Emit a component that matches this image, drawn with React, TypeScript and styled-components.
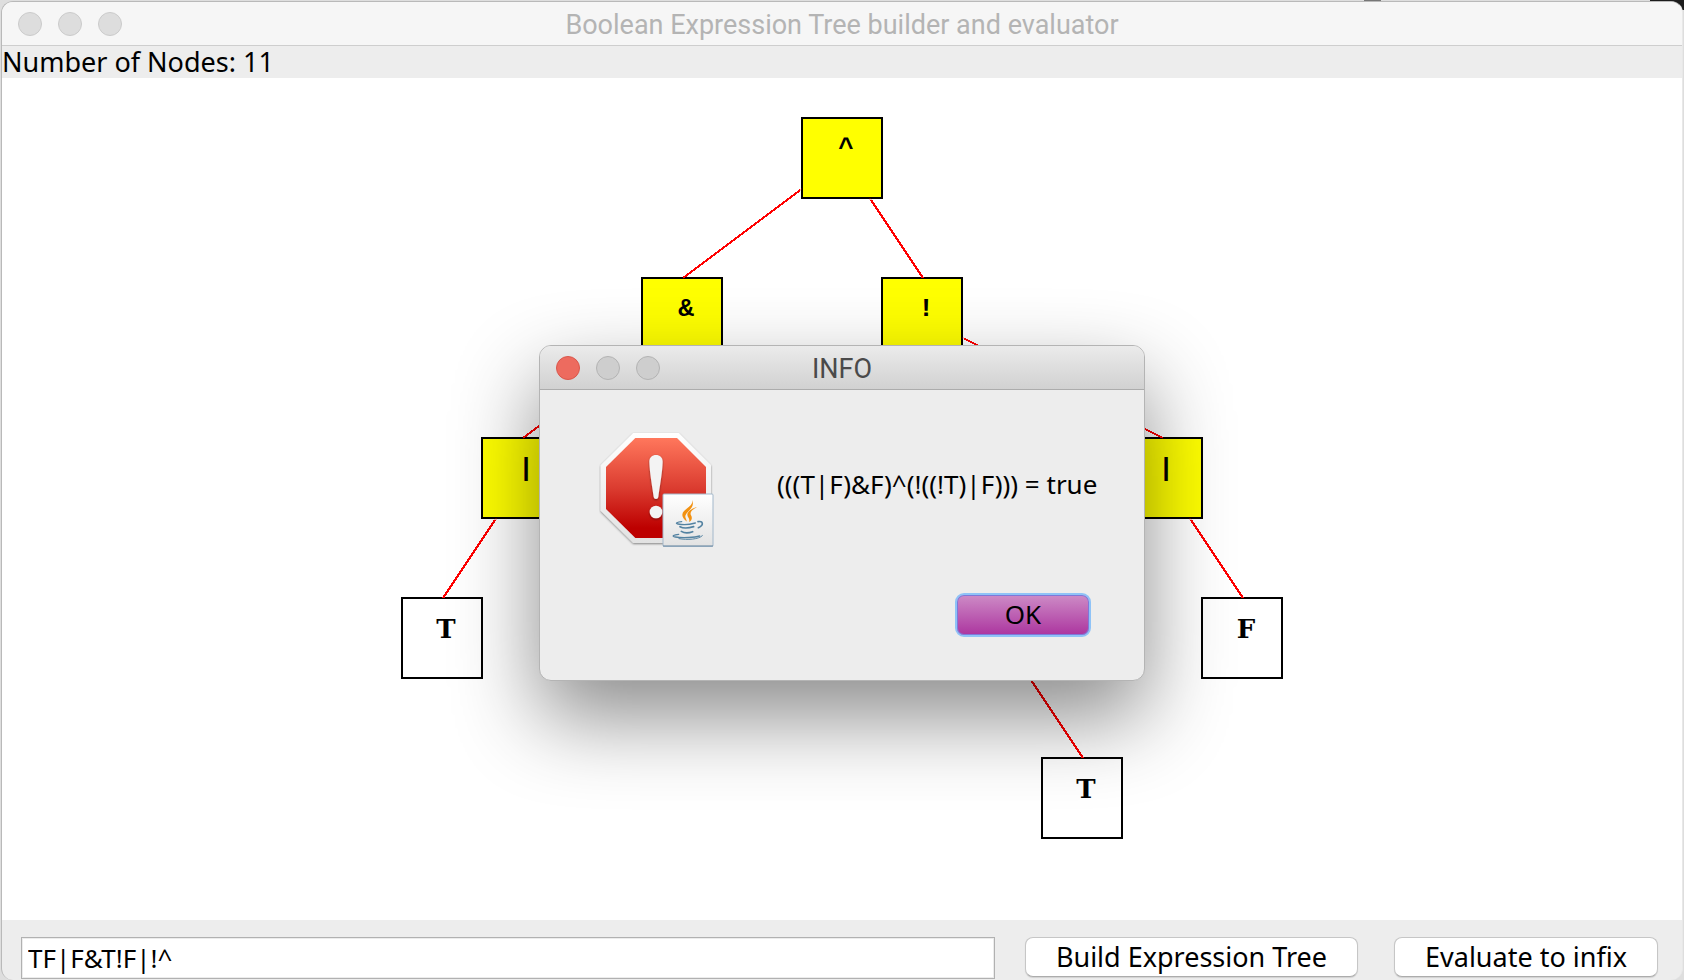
import React, { useState } from "react";
import styled, { createGlobalStyle } from "styled-components";

const GlobalStyle = createGlobalStyle`
  *, *::before, *::after { box-sizing: border-box; }
  body {
    margin: 0;
    font-family: "Noto Sans", "Open Sans", sans-serif;
    font-size: 27px;
    line-height: 32px;
    color: #000;
  }
`;

const titleFont = `Roboto, Inter, sans-serif`;

const Desktop = styled.div`
  display: flex;
  flex-direction: column;
  min-height: 100vh;
  padding: 1px 1px 0;
  background-color: #dedede;
  background-image: linear-gradient(90deg, transparent 0 81%, #777 81% 82%, transparent 82% 98%, #1c1c1c 98%);
  background-size: 100% 10px;
  background-repeat: no-repeat;
`;

const AppWindow = styled.main`
  flex: 1;
  display: flex;
  flex-direction: column;
  border: 1px solid #b9b9b9;
  border-right-color: #e8e8e8;
  border-bottom: 0;
  border-radius: 12px;
  overflow: hidden;
  background: #ededed;
`;

const TitleBar = styled.header<{ $active?: boolean }>`
  display: grid;
  grid-template-columns: 1fr auto 1fr;
  align-items: center;
  height: 44px;
  padding: 0 16px;
  border-bottom: 1px solid ${(p) => (p.$active ? "#acacac" : "#cecece")};
  background: ${(p) => (p.$active ? "linear-gradient(#ebebeb, #d1d1d1)" : "#f6f6f6")};
`;

const Title = styled.h1<{ $active?: boolean }>`
  margin: 0;
  padding-top: 2px;
  font-family: ${titleFont};
  font-size: 27px;
  line-height: 32px;
  font-weight: 400;
  color: ${(p) => (p.$active ? "#4a4a4a" : "#b4b4b4")};
`;

const Lights = styled.div`
  display: flex;
  gap: 16px;
`;

const Light = styled.button<{ $tone: "idle" | "dim" | "close" }>`
  width: 24px;
  height: 24px;
  padding: 0;
  border-radius: 50%;
  border: 1px solid ${(p) => ({ idle: "#cbcbcb", dim: "#b3b3b3", close: "#d9574c" })[p.$tone]};
  background: ${(p) => ({ idle: "#dddddd", dim: "#cecece", close: "#ed6b5f" })[p.$tone]};
`;

const Status = styled.p`
  margin: 0;
  height: 32px;
  line-height: 32px;
`;

const Canvas = styled.section`
  flex: 1;
  min-height: 760px;
  background: #fff;
`;

const Stage = styled.div`
  position: relative;
  width: 1000px;
  height: 760px;
  margin: 0 auto;
`;

const Edges = styled.svg`
  position: absolute;
  inset: 0;
  stroke: #f00;
  stroke-width: 2;
  shape-rendering: crispEdges;
`;

const NodeBox = styled.div<{ $x: number; $y: number; $leaf: boolean }>`
  position: absolute;
  left: ${(p) => p.$x - 41}px;
  top: ${(p) => p.$y}px;
  width: 82px;
  height: 82px;
  padding: 14px 0 0 8px;
  border: 2px solid #000;
  background: ${(p) => (p.$leaf ? "#fff" : "#ff0")};
  font-family: ${(p) => (p.$leaf ? `"DejaVu Serif", serif` : `"Liberation Mono", monospace`)};
  font-weight: 700;
  font-size: 26px;
  line-height: 32px;
  text-align: center;
`;

const Controls = styled.form`
  display: flex;
  align-items: flex-start;
  gap: 30px;
  height: 60px;
  padding: 17px 24px 0 19px;
`;

const Expression = styled.input`
  flex: 1;
  min-width: 0;
  height: 42px;
  padding: 0 6px;
  border: 1px solid #b1b1b1;
  outline: 1px solid #ececec;
  outline-offset: -2px;
  background: #fff;
  font: inherit;
  font-size: 26px;
  color: inherit;
`;

const Actions = styled.div`
  display: flex;
  gap: 36px;
`;

const ActionButton = styled.button`
  height: 40px;
  padding: 0 30px;
  border: 1px solid #c6c6c6;
  border-bottom-color: #acacac;
  border-radius: 8px;
  background: #fff;
  box-shadow: 0 1px 1px rgba(0, 0, 0, 0.12);
  font: inherit;
  color: inherit;
  white-space: nowrap;
`;

const Overlay = styled.div`
  position: absolute;
  inset: 0;
  display: flex;
  justify-content: center;
  align-items: flex-start;
  padding-top: 345px;
`;

const Dialog = styled.div`
  width: 606px;
  border: 1px solid #b4b4b4;
  border-radius: 12px;
  overflow: hidden;
  background: #ededed;
  box-shadow: 0 36px 84px rgba(0, 0, 0, 0.46);
`;

const DialogBody = styled.div`
  display: flex;
  align-items: center;
  gap: 63px;
  padding: 41px 32px 0 59px;
`;

const Message = styled.p`
  margin: 0;
  padding-bottom: 12px;
  font-size: 26px;
  white-space: nowrap;
`;

const DialogFooter = styled.div`
  display: flex;
  justify-content: flex-end;
  padding: 45px 53px 43px;
`;

const OkButton = styled.button`
  width: 136px;
  height: 44px;
  padding: 0 0 2px;
  border: 2px solid #8fc3f7;
  border-radius: 9px;
  background: linear-gradient(#cd8bc6, #ac359f);
  box-shadow: inset 0 0 0 1px #7f78d8;
  font: inherit;
  font-size: 26px;
  color: inherit;
`;

const nodes = [
  { label: "^", x: 500, y: 39 },
  { label: "&", x: 340, y: 199 },
  { label: "!", x: 580, y: 199 },
  { label: "|", x: 180, y: 359 },
  { label: "|", x: 820, y: 359 },
  { label: "T", x: 100, y: 519, leaf: true },
  { label: "F", x: 900, y: 519, leaf: true },
  { label: "T", x: 740, y: 679, leaf: true },
];

// Each edge runs from the middle of a parent to the top of its child.
const edges = [
  [501, 80, 341, 200],
  [501, 80, 581, 200],
  [341, 240, 181, 360],
  [581, 240, 821, 360],
  [181, 400, 101, 520],
  [821, 400, 901, 520],
  [661, 560, 741, 680],
];

function AlertIcon() {
  return (
    <svg width="115" height="117" viewBox="57 63 345 351" aria-hidden="true">
      <defs>
        <linearGradient id="rim" x1="0" y1="0" x2="0" y2="1">
          <stop offset="0" stopColor="#fff" />
          <stop offset="1" stopColor="#e2e2e2" />
        </linearGradient>
        <linearGradient id="red" x1="0" y1="0" x2="0" y2="1">
          <stop offset="0" stopColor="#ff775c" />
          <stop offset="0.5" stopColor="#db3c30" />
          <stop offset="0.9" stopColor="#bd0000" />
        </linearGradient>
        <filter id="soft" x="-10%" y="-10%" width="120%" height="120%">
          <feDropShadow dx="0" dy="3" stdDeviation="3" floodOpacity="0.45" />
        </filter>
      </defs>
      <path d="M160 69H296L393 166V302L296 399H160L62 302V166Z" fill="url(#rim)" filter="url(#soft)" />
      <path d="M166 84H291L378 171V297L291 384H166L78 297V171Z" fill="url(#red)" />
      <g fill="#f3f3f3" filter="url(#soft)">
        <path d="M208 155C208 142 217 135 228 135S248 142 248 155C247 190 238 235 235 261Q234 267 228 267T221 261C218 235 209 190 208 155Z" />
        <circle cx="228" cy="306" r="19" />
      </g>
      <rect x="249" y="252" width="150" height="157" rx="3" fill="url(#rim)" stroke="#a3b8cb" strokeWidth="3" />
      <path d="M249 408H399" stroke="#6987a1" strokeWidth="3" />
      <g fill="#f29111">
        <path d="M336 268C344 290 307 297 307 314C307 324 316 330 321 335C317 324 313 319 319 311C326 301 346 291 336 268Z" />
        <path d="M351 292C337 294 322 304 322 314C322 322 331 325 327 336C337 330 337 322 333 316C328 307 337 298 351 292Z" />
      </g>
      <g fill="none" stroke="#5382a1" strokeWidth="5" strokeLinecap="round">
        <path d="M305 335C292 336 284 340 294 342C309 345 332 343 346 339" strokeWidth="4" />
        <path d="M354 335C369 332 373 345 355 353" />
        <path d="M300 350C309 355 327 354 341 350" />
        <path d="M304 364C312 369 327 369 338 365" />
        <path d="M296 373C282 374 273 379 286 381C310 385 345 382 359 378" strokeWidth="4" />
        <path d="M297 386C322 390 355 389 367 377" strokeWidth="3" />
      </g>
    </svg>
  );
}

export default function App() {
  const [expression, setExpression] = useState("TF|F&T!F|!^");
  const [open, setOpen] = useState(true);

  return (
    <>
      <GlobalStyle />
      <Desktop>
        <AppWindow>
          <TitleBar>
            <Lights>
              <Light $tone="idle" aria-label="Close window" />
              <Light $tone="idle" aria-label="Minimize window" />
              <Light $tone="idle" aria-label="Zoom window" />
            </Lights>
            <Title>Boolean Expression Tree builder and evaluator</Title>
          </TitleBar>
          <Status>Number of Nodes: 11</Status>
          <Canvas>
            <Stage>
              {nodes.map((n) => (
                <NodeBox key={`${n.x}-${n.y}`} $x={n.x} $y={n.y} $leaf={!!n.leaf}>
                  {n.label}
                </NodeBox>
              ))}
              <Edges width="1000" height="760" aria-hidden="true">
                <defs>
                  <mask id="outside">
                    <rect width="1000" height="760" fill="#fff" />
                    {nodes.map((n) => (
                      <rect key={`${n.x}-${n.y}`} x={n.x - 41} y={n.y + 2} width="82" height="80" fill="#000" />
                    ))}
                  </mask>
                </defs>
                <g mask="url(#outside)">
                  {edges.map(([x1, y1, x2, y2]) => (
                    <line key={`${x2}-${y2}`} x1={x1} y1={y1} x2={x2} y2={y2} />
                  ))}
                </g>
              </Edges>
            </Stage>
          </Canvas>
          <Controls
            onSubmit={(e) => {
              e.preventDefault();
              setOpen(true);
            }}
          >
            <Expression
              aria-label="Postfix expression"
              value={expression}
              onChange={(e) => setExpression(e.target.value)}
            />
            <Actions>
              <ActionButton type="button">Build Expression Tree</ActionButton>
              <ActionButton type="submit">Evaluate to infix</ActionButton>
            </Actions>
          </Controls>
        </AppWindow>
      </Desktop>
      {open && (
        <Overlay>
          <Dialog role="dialog" aria-labelledby="dialog-title">
            <TitleBar $active>
              <Lights>
                <Light $tone="close" aria-label="Close" onClick={() => setOpen(false)} />
                <Light $tone="dim" aria-label="Minimize" />
                <Light $tone="dim" aria-label="Zoom" />
              </Lights>
              <Title as="h2" id="dialog-title" $active>
                INFO
              </Title>
            </TitleBar>
            <DialogBody>
              <AlertIcon />
              <Message>(((T|F)&amp;F)^(!((!T)|F))) = true</Message>
            </DialogBody>
            <DialogFooter>
              <OkButton onClick={() => setOpen(false)}>OK</OkButton>
            </DialogFooter>
          </Dialog>
        </Overlay>
      )}
    </>
  );
}
